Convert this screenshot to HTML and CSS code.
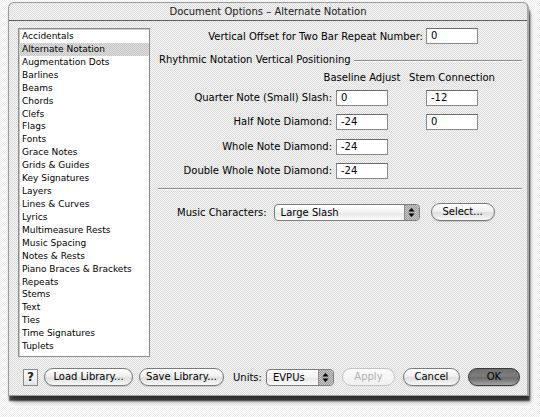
FILE: index.html
```html
<!DOCTYPE html>
<html>
<head>
<meta charset="utf-8">
<title>Document Options – Alternate Notation</title>
<link rel="stylesheet" href="styles.css">
</head>
<body>
<div class="window">
  <div class="titlebar">Document Options – Alternate Notation</div>
  <div class="content">
    <ul class="list">
      <li>Accidentals</li>
      <li class="selected">Alternate Notation</li>
      <li>Augmentation Dots</li>
      <li>Barlines</li>
      <li>Beams</li>
      <li>Chords</li>
      <li>Clefs</li>
      <li>Flags</li>
      <li>Fonts</li>
      <li>Grace Notes</li>
      <li>Grids &amp; Guides</li>
      <li>Key Signatures</li>
      <li>Layers</li>
      <li>Lines &amp; Curves</li>
      <li>Lyrics</li>
      <li>Multimeasure Rests</li>
      <li>Music Spacing</li>
      <li>Notes &amp; Rests</li>
      <li>Piano Braces &amp; Brackets</li>
      <li>Repeats</li>
      <li>Stems</li>
      <li>Text</li>
      <li>Ties</li>
      <li>Time Signatures</li>
      <li>Tuplets</li>
    </ul>
    <div class="panel">
      <div class="offset-row">
        <span class="label">Vertical Offset for Two Bar Repeat Number:</span>
        <div class="field">0</div>
      </div>
      <div class="group-head">
        <span>Rhythmic Notation Vertical Positioning</span>
        <div class="rule"></div>
      </div>
      <div class="grid colheads">
        <div></div>
        <div class="colhead">Baseline Adjust</div>
        <div class="colhead">Stem Connection</div>
      </div>
      <div class="grid rows">
        <div class="flabel">Quarter Note (Small) Slash:</div><div class="field">0</div><div class="field">-12</div>
        <div class="flabel">Half Note Diamond:</div><div class="field">-24</div><div class="field">0</div>
        <div class="flabel">Whole Note Diamond:</div><div class="field">-24</div><div></div>
        <div class="flabel">Double Whole Note Diamond:</div><div class="field">-24</div><div></div>
      </div>
      <div class="separator"></div>
      <div class="music-row">
        <span class="label">Music Characters:</span>
        <div class="popup popup-chars"><span class="popup-text">Large Slash</span><span class="arrows"><svg width="7" height="11" viewBox="0 0 7 11"><path d="M3.5 1 L6.5 4.5 H0.5 Z M3.5 10 L6.5 6.5 H0.5 Z" fill="#000"/></svg></span></div>
        <button class="btn btn-select">Select...</button>
      </div>
    </div>
  </div>
  <div class="footer">
    <button class="help">?</button>
    <button class="btn btn-load">Load Library...</button>
    <button class="btn btn-save">Save Library...</button>
    <span class="units-label">Units:</span>
    <div class="popup popup-units"><span class="popup-text">EVPUs</span><span class="arrows"><svg width="7" height="11" viewBox="0 0 7 11"><path d="M3.5 1 L6.5 4.5 H0.5 Z M3.5 10 L6.5 6.5 H0.5 Z" fill="#000"/></svg></span></div>
    <button class="btn btn-apply" disabled>Apply</button>
    <button class="btn btn-cancel">Cancel</button>
    <button class="btn btn-ok">OK</button>
  </div>
</div>
</body>
</html>
```

FILE: styles.css
```css
html, body {
  margin: 0;
  padding: 0;
}

body {
  width: 540px;
  height: 417px;
  overflow: hidden;
  font-family: "DejaVu Sans", "Liberation Sans", sans-serif;
  font-size: 10px;
  color: #000;
  background: repeating-conic-gradient(#ffffff 0 25%, #ececec 0 50%) 0 0 / 2px 2px;
  padding-top: 2px;
  box-sizing: border-box;
}

.window {
  margin-left: 8px;
  width: 521px;
  height: 394px;
  box-sizing: border-box;
  border: 1px solid #9a9a9a;
  border-right: 2px solid #a8a8a8;
  border-radius: 6px 6px 0 0;
  background: repeating-conic-gradient(#f6f6f6 0 25%, #dadada 0 50%) 0 0 / 2px 2px;
  box-shadow: 1px 5px 2px rgba(0, 0, 0, 0.72), 3px 8px 5px -2px rgba(0, 0, 0, 0.3);
  display: flex;
  flex-direction: column;
}

.titlebar {
  height: 17px;
  line-height: 17px;
  border-bottom: 1px solid #5e5e5e;
  text-align: center;
  color: #1a1a1a;
  white-space: nowrap;
}

.content {
  display: flex;
  padding: 7px 0 0 9px;
}

.list {
  list-style: none;
  margin: 0;
  padding: 1px 0 0 0;
  width: 132px;
  height: 329px;
  box-sizing: border-box;
  border: 1px solid #8c8c8c;
  box-shadow: inset 1px 1px 0 #c8c8c8;
  background: #fff;
  font-size: 9px;
}

.list li {
  height: 12.93px;
  line-height: 12.93px;
  padding-left: 3px;
  white-space: nowrap;
}

.list li.selected {
  background: repeating-conic-gradient(#e0e0e0 0 25%, #c4c4c4 0 50%) 0 0 / 2px 2px;
}

.panel {
  margin-left: 8px;
  width: 364px;
}

.offset-row {
  display: flex;
  justify-content: flex-end;
  align-items: center;
  height: 16px;
  padding-right: 44px;
}

.offset-row .label {
  margin-right: 3px;
}

.field {
  width: 52px;
  height: 16px;
  box-sizing: border-box;
  border: 1px solid #8a8a8a;
  border-top-color: #6a6a6a;
  background: #fff;
  padding-left: 4px;
  line-height: 14px;
  white-space: nowrap;
}

.group-head {
  display: flex;
  align-items: center;
  height: 12px;
  margin-top: 9px;
  padding-left: 1px;
}

.group-head .rule {
  flex: 1;
  height: 1px;
  margin-left: 3px;
  margin-top: 3px;
  background: #8a8a8a;
  box-shadow: 0 1px 0 #fff;
}

.grid {
  display: grid;
  grid-template-columns: 178px 90px 52px;
}

.colheads {
  margin-top: 7px;
  height: 12px;
  line-height: 12px;
}

.colhead {
  width: 52px;
  display: flex;
  justify-content: center;
  white-space: nowrap;
}

.rows {
  margin-top: 6px;
  row-gap: 8.33px;
}

.flabel {
  text-align: right;
  padding-right: 4px;
  line-height: 16px;
  white-space: nowrap;
}

.separator {
  margin-top: 9px;
  height: 1px;
  background: #8a8a8a;
  box-shadow: 0 1px 0 #fff;
}

.music-row {
  display: flex;
  align-items: center;
  margin-top: 15px;
  padding-left: 19px;
  height: 17px;
}

.music-row .label {
  margin-right: 7px;
}

.popup {
  display: flex;
  align-items: stretch;
  box-sizing: border-box;
  border: 1px solid #7c7c7c;
  border-radius: 4px;
  background: linear-gradient(#ffffff, #f2f2f2 50%, #e6e6e6 51%, #fafafa);
  overflow: hidden;
}

.popup-text {
  flex: 1;
  padding-left: 6px;
  line-height: 15px;
  white-space: nowrap;
}

.arrows {
  width: 14px;
  display: flex;
  align-items: center;
  justify-content: center;
  background: repeating-conic-gradient(#c8c8c8 0 25%, #9c9c9c 0 50%) 0 0 / 2px 2px;
  border-left: 1px solid #8a8a8a;
}

.popup-chars {
  width: 146px;
  height: 17px;
}

.btn {
  font-family: inherit;
  font-size: 10px;
  color: #000;
  height: 18px;
  padding: 0;
  box-sizing: border-box;
  border: 1px solid #7a7a7a;
  border-radius: 9px;
  background: linear-gradient(#ffffff, #f0f0f0 45%, #dedede 55%, #f8f8f8);
  box-shadow: 0 1px 1px rgba(0, 0, 0, 0.15);
  line-height: 16px;
  white-space: nowrap;
}

.btn-select {
  width: 64px;
  margin-left: 11px;
}

.footer {
  display: flex;
  align-items: center;
  margin-top: 11px;
  padding-left: 14px;
  height: 18px;
}

.help {
  width: 15px;
  height: 17px;
  padding: 0;
  box-sizing: border-box;
  border: 1px solid #8a8a8a;
  background: linear-gradient(#ffffff, #e4e4e4);
  font-family: inherit;
  font-size: 12px;
  font-weight: bold;
  line-height: 15px;
  color: #222;
}

.btn-load {
  width: 89px;
  margin-left: 6px;
}

.btn-save {
  width: 85px;
  margin-left: 6px;
}

.units-label {
  margin-left: 9px;
}

.popup-units {
  width: 68px;
  height: 17px;
  margin-left: 4px;
}

.btn-apply {
  width: 53px;
  margin-left: 8px;
  color: #b0b0b0;
  border-color: #c4c4c4;
  background: linear-gradient(#fbfbfb, #f0f0f0);
  box-shadow: none;
}

.btn-cancel {
  width: 57px;
  margin-left: 8px;
}

.btn-ok {
  width: 52px;
  margin-left: 8px;
  border-color: #3a3a3a;
  background: linear-gradient(#6e6e6e, #7e7e7e 45%, #6a6a6a 55%, #a4a4a4);
}
```
